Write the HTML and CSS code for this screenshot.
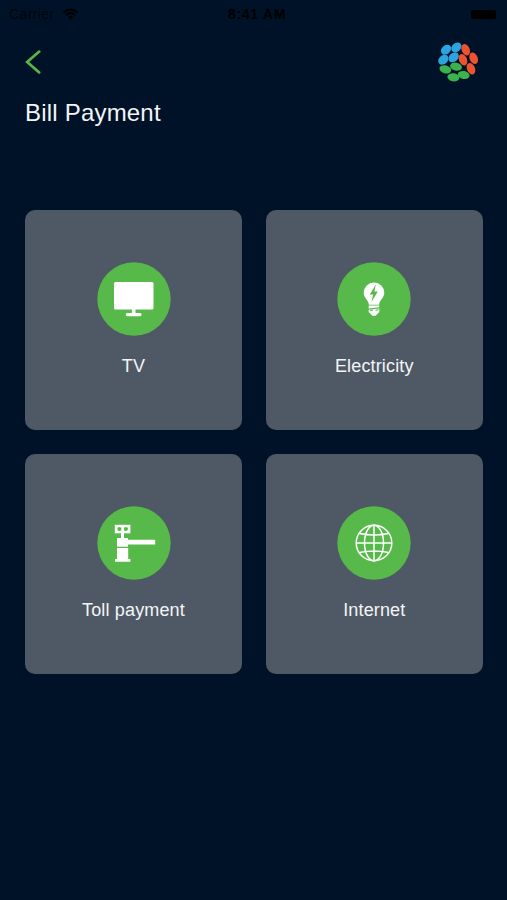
FILE: index.html
```
<!DOCTYPE html>
<html lang="en">
<head>
    <meta charset="UTF-8">
    <meta name="viewport" content="width=device-width, initial-scale=1.0">
    <title>Bill Payment</title>
    <link rel="stylesheet" href="styles.css">
</head>
<body>
    <!-- Status Bar -->
    <div class="status-bar">
        <div class="carrier">
            <span>Carrier</span>
            <svg class="wifi" viewBox="0 0 16 12">
                <path d="M1 4.5Q8-1.5 15 4.5M3.5 7Q8 3.2 12.5 7" fill="none" stroke="#000" stroke-width="2"/>
                <path d="M5.3 8.8Q8 6.8 10.7 8.8L8 11.8Z"/>
            </svg>
        </div>
        <div class="time">8:41 AM</div>
        <div class="battery"></div>
    </div>

    <!-- Header -->
    <header class="header">
        <svg class="back" viewBox="0 0 16 24">
            <path d="M14.2 1.6L2.2 12L14.2 22.4" fill="none" stroke="#56b947" stroke-width="2.7" stroke-linecap="round"/>
        </svg>
        <svg class="logo" viewBox="0 0 168 168">
            <g fill="#2ba4e0">
                <ellipse cx="48" cy="44" rx="17" ry="13" transform="rotate(-42 48 44)"/>
                <ellipse cx="79" cy="37" rx="17" ry="13" transform="rotate(-40 79 37)"/>
                <ellipse cx="40" cy="74" rx="17" ry="13" transform="rotate(-42 40 74)"/>
                <ellipse cx="71" cy="67" rx="17" ry="13" transform="rotate(-42 71 67)"/>
            </g>
            <g fill="#ee5330">
                <ellipse cx="107" cy="44" rx="18" ry="12" transform="rotate(67 107 44)"/>
                <ellipse cx="131" cy="70" rx="18" ry="12" transform="rotate(67 131 70)"/>
                <ellipse cx="99" cy="74" rx="18" ry="12" transform="rotate(67 99 74)"/>
                <ellipse cx="123" cy="101" rx="18" ry="12" transform="rotate(67 123 101)"/>
            </g>
            <g fill="#3bb34c">
                <ellipse cx="46" cy="103" rx="18" ry="12" transform="rotate(15 46 103)"/>
                <ellipse cx="78" cy="95" rx="18" ry="12" transform="rotate(12 78 95)"/>
                <ellipse cx="70" cy="127" rx="18" ry="12" transform="rotate(8 70 127)"/>
                <ellipse cx="101" cy="120" rx="18" ry="12" transform="rotate(10 101 120)"/>
            </g>
        </svg>
    </header>

    <h1>Bill Payment</h1>

    <!-- Payment Options -->
    <main class="options">
        <div class="card">
            <svg class="icon" viewBox="0 0 74 74">
                <circle class="disc" cx="37" cy="37" r="36.7"/>
                <rect x="17" y="20" width="39.5" height="27.5" rx="1.5"/>
                <path d="M34.9 47h3.6v4h4.5a1.6 1.6 0 0 1 0 3.2H30.3a1.6 1.6 0 0 1 0-3.2h4.6z"/>
            </svg>
            <span>TV</span>
        </div>
        <div class="card">
            <svg class="icon" viewBox="0 0 74 74">
                <circle class="disc" cx="37" cy="37" r="36.7"/>
                <path d="M37 20.5a10.3 10.3 0 0 1 10.3 10.3c0 5.2-4.5 6.5-5.2 11.9H31.9c-.7-5.4-5.2-6.7-5.2-11.9A10.3 10.3 0 0 1 37 20.5z"/>
                <path class="disc" d="M38.8 22.5l-6 10h3.4l-1.8 7.5 6.4-10.5h-3.4z"/>
                <path d="M31.7 43.6h10.6v1.6l-10.6 1.2zM31.7 47.8l10.6-1.2v3.4l-3.6 3.8h-3.4L31.7 50z"/>
                <path d="M33 48.8l3-.8M38.5 48.4l3-.8" class="thread"/>
            </svg>
            <span>Electricity</span>
        </div>
        <div class="card">
            <svg class="icon" viewBox="0 0 74 74">
                <circle class="disc" cx="37" cy="37" r="36.7"/>
                <rect x="17.8" y="18.8" width="15.6" height="8.5"/>
                <circle class="disc" cx="22.4" cy="23" r="2.1"/>
                <circle class="disc" cx="28.9" cy="23" r="2.1"/>
                <path d="M24 27h3v5h4v1.7h27.2v4.8H31v2.3H20V32h4z"/>
                <path d="M20 42h11.2v11h2.2v2.7H18V53h2z"/>
            </svg>
            <span>Toll payment</span>
        </div>
        <div class="card">
            <svg class="icon" viewBox="0 0 74 74">
                <circle class="disc" cx="37" cy="37" r="36.7"/>
                <g class="globe">
                    <circle cx="37" cy="37" r="17.8"/>
                    <ellipse cx="37" cy="37" rx="9.5" ry="17.8"/>
                    <path d="M37 19v36M19 37h36M22.5 27.5q14.5 3 29 0M22.5 46.5q14.5-3 29 0"/>
                </g>
            </svg>
            <span>Internet</span>
        </div>
    </main>
</body>
</html>
```
FILE: styles.css
```
/* Page */
body {
    font-family: "Liberation Sans", Arial, sans-serif;
    margin: 0;
    padding: 0;
    height: 900px;
    overflow: hidden;
    background-color: #001227;
    color: #f3f5f8;
}

/* Status bar */
.status-bar {
    display: grid;
    grid-template-columns: 1fr auto 1fr;
    align-items: center;
    height: 28px;
    padding: 0 11px 0 9px;
    color: #000;
    font-size: 14px;
}
.carrier {
    display: flex;
    align-items: center;
    gap: 7px;
    color: #00050d;
    letter-spacing: 0.4px;
}
.wifi {
    width: 17px;
    height: 12px;
}
.time {
    padding-left: 9px;
    font-weight: bold;
    letter-spacing: 0.7px;
}
.battery {
    justify-self: end;
    width: 25px;
    height: 9px;
    border-radius: 2px;
    background: #000;
}

/* Header */
.header {
    display: flex;
    justify-content: space-between;
    height: 56px;
    padding: 7px 21px 0 25px;
}
.back {
    width: 16px;
    height: 24px;
    margin-top: 15px;
}
.logo {
    width: 56px;
    height: 56px;
}
h1 {
    margin: 8px 25px 0;
    font-size: 24px;
    font-weight: normal;
    line-height: 28px;
    letter-spacing: 0.2px;
}

/* Option cards */
.options {
    display: grid;
    grid-template-columns: 1fr 1fr;
    grid-auto-rows: 220px;
    gap: 24.4px;
    padding: 82.6px 24.5px 0 25.3px;
}
.card {
    display: flex;
    flex-direction: column;
    align-items: center;
    box-sizing: border-box;
    padding-top: 52.5px;
    border-radius: 10px;
    background-color: #4f5965;
    font-size: 18px;
    line-height: 22px;
    letter-spacing: 0.15px;
}
.icon {
    width: 74px;
    height: 74px;
    margin-bottom: 18.5px;
    fill: #fff;
}
.disc {
    fill: #56b949;
}
.thread {
    fill: none;
    stroke: #56b949;
    stroke-width: 1;
}
.globe {
    fill: none;
    stroke: #fff;
    stroke-width: 1.5;
}
```
